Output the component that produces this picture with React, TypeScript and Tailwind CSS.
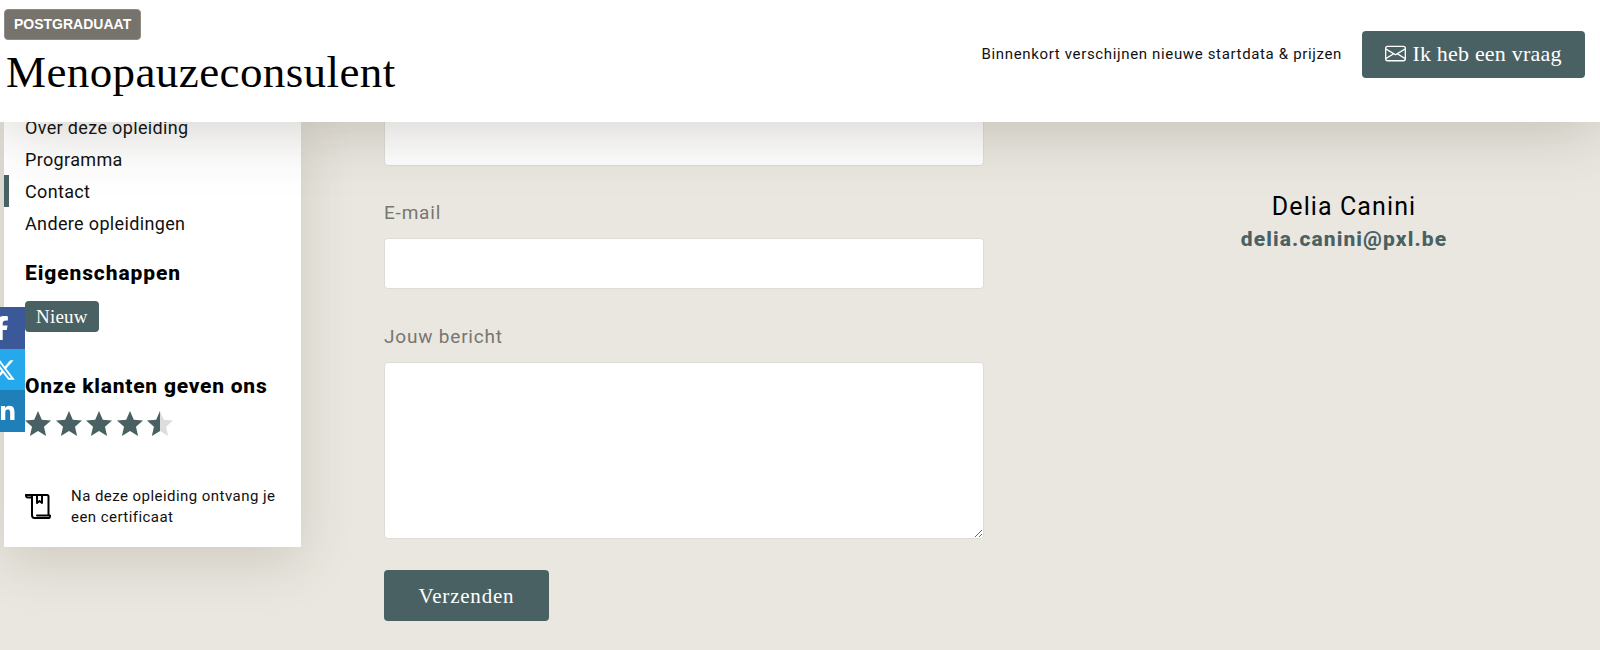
import React from 'react';
import { BsEnvelope } from 'react-icons/bs';
import { FaFacebookF, FaLinkedinIn, FaXTwitter } from 'react-icons/fa6';

const sans = "font-['Roboto',sans-serif]";
const serif = "font-['Liberation_Serif',serif]";

const navItems = ['Over deze opleiding', 'Programma', 'Contact', 'Andere opleidingen'];

const Star = ({ className }: { className: string }) => (
  <svg width="26" height="25" viewBox="0 0 26 25" className={className} fill="currentColor">
    <polygon points="13,0 16.800,8.700 26,9.500 19,15.700 21.100,25 13,20 4.900,25 7,15.700 0,9.500 9.200,8.700" />
  </svg>
);

const ScrollIcon = () => (
  <svg width="26" height="26" viewBox="0 0 26 26" fill="none" stroke="#000" strokeWidth="2" strokeLinecap="round" strokeLinejoin="round">
    <path d="M1 2h4c1 0 2 1 2 2v18c0 1.500 1 3 2.500 3H24c1 0 1-1 1-2.500H12" />
    <path d="M1 2c0 1.500 1 2.500 2 2.500h4" />
    <path d="M5 2h17c1 0 1.500.5 1.500 1.500V22" />
    <path d="M12 2v8l2.500-2 2.500 2V2" />
  </svg>
);

const Field = ({ label, area }: { label: string; area?: boolean }) => (
  <div className="mb-[34px]">
    <label className={`block mb-[12px] text-[19px] leading-[27px] tracking-[0.8px] text-[#787670] ${sans}`}>{label}</label>
    {area ? (
      <textarea className="block w-full h-[177px] rounded-[4px] border border-[#dedcd6] bg-white" />
    ) : (
      <input className="block w-full h-[51px] rounded-[4px] border border-[#dedcd6] bg-white" />
    )}
  </div>
);

export default function App() {
  return (
    <div className={`relative h-[650px] overflow-hidden bg-[#eae7e0] ${sans}`}>
      {/* Sticky header */}
      <header className="relative z-20 flex h-[122px] items-center justify-between bg-white pl-[4px] pr-[15px] shadow-[0_0_70px_rgba(60,55,40,0.28)]">
        <div className="self-start pt-[9px]">
          <span className="block w-fit rounded-[4px] border border-[#8d8b85] bg-[#75736c] px-[9px] font-['Liberation_Sans',sans-serif] text-[14px] font-bold leading-[29px] text-white">POSTGRADUAAT</span>
          <h1 className={`mt-[6px] pl-[2px] text-[45px] leading-[52px] tracking-[0.4px] text-black ${serif}`}>Menopauzeconsulent</h1>
        </div>
        <div className="flex items-center gap-[20px] pb-[14px]">
          <span className="text-[15px] tracking-[0.65px] text-[#111]">Binnenkort verschijnen nieuwe startdata &amp; prijzen</span>
          <button className={`flex h-[47px] w-[223px] items-center justify-center gap-[6px] rounded-[4px] bg-[#4a6163] pb-[2px] text-[22px] tracking-[0.2px] text-white ${serif}`}>
            <BsEnvelope size={21} />
            Ik heb een vraag
          </button>
        </div>
      </header>

      <main className="flex items-start pl-[4px]">
        {/* Sidebar */}
        <aside className="relative z-10 -mt-[11px] h-[436px] w-[297px] bg-white shadow-[0_14px_50px_rgba(60,55,40,0.16)]">
          <nav className="text-[18px] leading-[34px] tracking-[0.35px] text-[#111]">
            {navItems.map((item) => (
              <div key={item} className={`h-[32px] pl-[16px] border-l-[5px] ${item === 'Contact' ? 'border-[#4a6163]' : 'border-transparent'}`}>
                {item}
              </div>
            ))}
          </nav>
          <div className="pl-[21px]">
            <h3 className="mt-[18px] text-[21px] font-extrabold leading-[32px] tracking-[0.9px] text-black">Eigenschappen</h3>
            <span className={`mt-[12px] block w-fit rounded-[4px] bg-[#4a6163] px-[11px] text-[19px] leading-[31px] tracking-[0.2px] text-white ${serif}`}>Nieuw</span>
            <h3 className="mt-[38px] text-[21px] font-extrabold leading-[32px] tracking-[0.75px] text-black">Onze klanten geven ons</h3>
            <div className="mt-[9px] flex gap-[4.500px]">
              {[0, 1, 2, 3].map((i) => (
                <Star key={i} className="text-[#4a6163]" />
              ))}
              <div className="relative">
                <Star className="text-[#dddddd]" />
                <div className="absolute left-0 top-0 w-[13px] overflow-hidden">
                  <Star className="text-[#4a6163]" />
                </div>
              </div>
            </div>
            <div className="mt-[48px] flex items-center gap-[20px]">
              <ScrollIcon />
              <p className="w-[215px] pt-[2px] text-[15px] leading-[21px] tracking-[0.45px] text-[#111]">Na deze opleiding ontvang je een certificaat</p>
            </div>
          </div>
        </aside>

        {/* Form */}
        <form className="relative z-0 ml-[83px] -mt-[7px] w-[600px]">
          <div className="mb-[33px] h-[51px] rounded-[4px] border border-[#dedcd6] bg-white" />
          <Field label="E-mail" />
          <Field label="Jouw bericht" area />
          <button className={`-mt-[3px] block h-[51px] w-[165px] rounded-[4px] bg-[#4a6163] pt-[3px] text-[21px] tracking-[0.8px] text-white ${serif}`}>Verzenden</button>
        </form>

        {/* Contact person */}
        <section className="ml-[160px] mt-[69px] w-[400px] text-center">
          <div className="text-[25px] leading-[32px] tracking-[1.1px] text-black">Delia Canini</div>
          <a className="block text-[21px] font-extrabold leading-[32px] tracking-[1.1px] text-[#4a6163]">delia.canini@pxl.be</a>
        </section>
      </main>

      {/* Share buttons, partly off screen */}
      <div className="absolute left-0 top-[307px] z-30 w-[25px] overflow-hidden text-white">
        <div className="flex h-[42px] items-center justify-end bg-[#3b5998] pr-[12px]"><FaFacebookF size={24} className="shrink-0" /></div>
        <div className="flex h-[41px] items-center justify-end bg-[#26a9ec] pr-[9px]"><FaXTwitter size={24} className="shrink-0" /></div>
        <div className="flex h-[42px] items-center justify-end bg-[#1f7fb8] pr-[9px]"><FaLinkedinIn size={24} className="shrink-0" /></div>
      </div>
    </div>
  );
}
